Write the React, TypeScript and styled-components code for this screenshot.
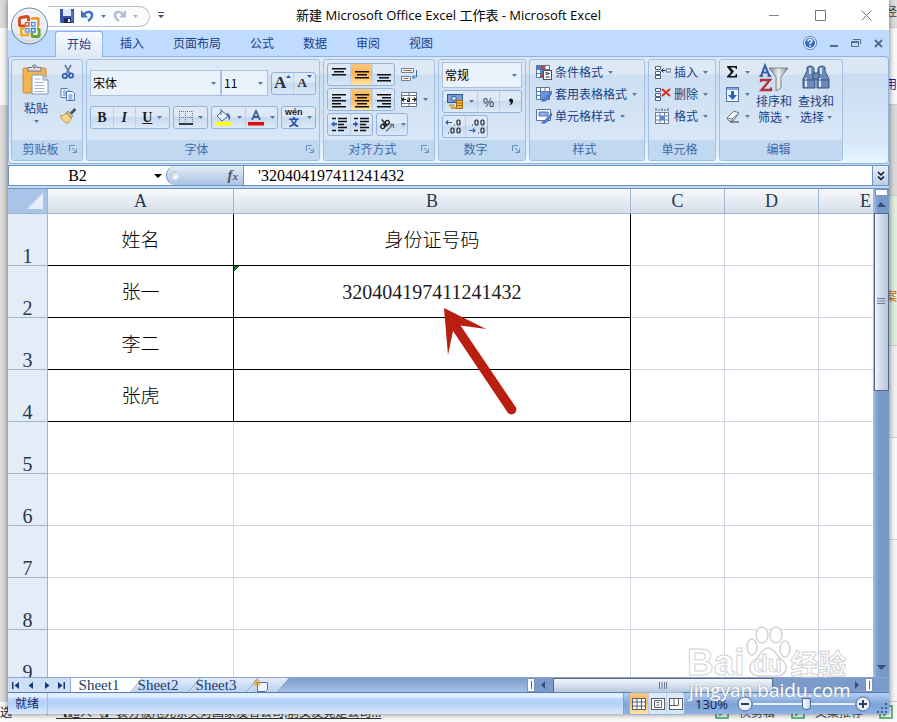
import React from "react";
import styled, { createGlobalStyle, css } from "styled-components";

const ui = `"Noto Sans CJK SC", "Open Sans", sans-serif`;
const serif = `"Liberation Serif", "Noto Sans CJK SC", serif`;

const Global = createGlobalStyle`
  * { box-sizing: border-box; }
  body { margin: 0; font-family: ${ui}; font-size: 12px; line-height: 16px; overflow: hidden; }
  button, input, select { font: inherit; color: inherit; margin: 0; padding: 0; border: 0; background: none; border-radius: 0; outline: none; }
  svg { display: block; flex: none; }
`;

/* ---------- page behind the window ---------- */

const Desktop = styled.div`
  position: relative;
  height: 100vh;
  padding: 0 8px 8px;
  overflow: hidden;
  background: #fafafa;
`;

const Backdrop = styled.div`
  position: absolute;
  inset: 0;
  display: grid;
  grid-template: 1fr 20px / 8px 1fr 12px;
`;

const LeftEdge = styled.div`
  background: linear-gradient(#dcdcdc 0 28px, #fafafa 28px 105px, #dddbd9 105px);
`;

const RightEdge = styled.div`
  grid-column: 3;
  display: flex;
  flex-direction: column;
  overflow: hidden;
`;

const EdgeBlock = styled.div<{ $h?: number; $bg: string; $ink?: string; $top?: number }>`
  flex: ${(p) => (p.$h ? `none` : `1`)};
  height: ${(p) => (p.$h ? `${p.$h}px` : "auto")};
  padding-top: ${(p) => p.$top || 0}px;
  background: ${(p) => p.$bg};
  color: ${(p) => p.$ink || "#444"};
  border-bottom: 1px solid #cfcfcf;
  white-space: nowrap;
  overflow: hidden;
`;

const PageFoot = styled.div`
  grid-column: 1 / -1;
  display: flex;
  align-items: center;
  padding-right: 4px;
  background: #fafafa;
  color: #555;
  font-size: 12px;
  line-height: 20px;
  white-space: nowrap;
`;

const FootWord = styled.span`
  width: 42px;
  color: #222;
`;

const FootLink = styled.a`
  color: #333;
  margin-left: 4px;
  margin-right: auto;
`;

const FootItem = styled.span`
  display: flex;
  gap: 10px;
  align-items: center;
  margin-left: 16px;
`;

/* ---------- window ---------- */

const Window = styled.div`
  position: relative;
  display: flex;
  flex-direction: column;
  height: 100%;
  background: #bfdbff;
  box-shadow: 0 0 6px rgba(0, 0, 0, 0.55);
`;

const TitleBar = styled.header`
  display: grid;
  grid-template-columns: 1fr auto 1fr;
  align-items: center;
  height: 30px;
  background: #fff;
`;

const Quick = styled.div`
  display: flex;
  align-items: center;
  padding-left: 40px;
  gap: 8px;
`;

const QuickPill = styled.div`
  display: flex;
  align-items: center;
  gap: 7px;
  width: 102px;
  height: 21px;
  padding-left: 12px;
  margin-top: 2px;
  border: 1px solid #b9c0ca;
  border-left: 0;
  border-radius: 0 11px 11px 0;
  background: #fbfcfe;
`;

const Title = styled.h1`
  margin: 0;
  font: 13px/16px "Open Sans", "Noto Sans CJK SC", sans-serif;
  color: #000;
  white-space: nowrap;
`;

const Caption = styled.div`
  display: flex;
  justify-content: flex-end;
`;

const CaptionButton = styled.button`
  display: grid;
  place-items: center;
  width: 46px;
  height: 30px;
`;

const Orb = styled.button`
  position: absolute;
  left: 2px;
  top: 7px;
  width: 40px;
  height: 40px;
  z-index: 2;
`;

const TabBar = styled.nav`
  display: flex;
  height: 26px;
  padding-left: 47px;
  align-items: stretch;
  color: #15428b;
`;

const Tab = styled.button<{ $on?: boolean }>`
  padding: 0 14px 0 15px;
  line-height: 24px;
  ${(p) =>
    p.$on &&
    css`
      width: 48px;
      margin: 1px 2px -1px 0;
      padding: 0 0 3px;
      border: 1px solid #8db2e3;
      border-bottom: 0;
      border-radius: 3px 3px 0 0;
      background: linear-gradient(#f6faff, #dfeaf6);
      z-index: 1;
    `}
`;

const TabTools = styled.div`
  display: flex;
  align-items: center;
  gap: 13px;
  margin-left: auto;
  padding-right: 5px;
`;

const PlainButton = styled.button`
  display: inline-flex;
  align-items: center;
  justify-content: center;
`;

const Ribbon = styled.section`
  display: flex;
  gap: 3px;
  padding: 2px;
  border: 1px solid #8db2e3;
  border-radius: 4px;
  height: 108px;
  background: linear-gradient(#dbe7f5 0 16px, #c9dcf1 17px, #d8e8f8 80%, #e6f7ff);
`;

const Group = styled.section<{ $w: number }>`
  display: flex;
  flex-direction: column;
  width: ${(p) => p.$w}px;
  height: 102px;
  border: 1px solid #a3c0e2;
  border-radius: 3px;
  overflow: hidden;
  background: linear-gradient(#dfe9f6 0 14px, #cddff2 15px, #dbe9f8);
`;

const GroupBody = styled.div<{ $top?: number; $gap?: number }>`
  flex: 1;
  display: flex;
  flex-direction: column;
  gap: ${(p) => p.$gap || 0}px;
  padding: ${(p) => p.$top || 0}px 3px 0;
`;

const GroupLabel = styled.footer`
  display: flex;
  align-items: center;
  height: 20px;
  padding: 0 5px 2px 0;
  background: #c1d8f1;
  color: #3e6aaa;

  span {
    flex: 1;
    text-align: center;
  }
`;

const Row = styled.div<{ $gap?: number }>`
  display: flex;
  align-items: center;
  gap: ${(p) => p.$gap || 0}px;
`;

const Segment = styled.div`
  display: flex;
  height: 23px;
  border: 1px solid #95b3da;
  border-radius: 3px;
  overflow: hidden;
  background: linear-gradient(#dde9f7 0 45%, #c6d9ef 46%, #dbe9f8);
`;

const SegButton = styled.button<{ $w?: number; $on?: boolean }>`
  display: flex;
  align-items: center;
  justify-content: center;
  gap: 5px;
  width: ${(p) => p.$w || 22}px;
  color: #1d1d1d;
  background: ${(p) => (p.$on ? "linear-gradient(#fcc77c, #fdb45b 45%, #ffe6a4)" : "none")};

  & + & {
    border-left: 1px solid #bccfe8;
  }
`;

const Glyph = styled.span<{ $italic?: boolean; $line?: boolean; $size?: number }>`
  font: ${(p) => (p.$italic ? "italic " : "")}bold ${(p) => p.$size || 14}px/16px "Liberation Serif", serif;
  text-decoration: ${(p) => (p.$line ? "underline" : "none")};
`;

const SizeGlyph = styled(Glyph)`
  display: flex;
  align-items: center;
  color: #2b2f38;

  svg {
    align-self: flex-start;
  }
`;

const Combo = styled.label<{ $w: number }>`
  position: relative;
  display: flex;
  width: ${(p) => p.$w}px;
  height: 26px;
  border: 1px solid #abc1de;
  background: #eaf2fb;
  color: #000;

  select {
    appearance: none;
    width: 100%;
    padding-left: 2px;
  }

  svg {
    position: absolute;
    right: 4px;
    top: 11px;
    pointer-events: none;
  }
`;

const ClipRow = styled.div`
  display: flex;
  gap: 10px;
  padding: 4px 3px 0 7px;
`;

const BigButton = styled.button<{ $w: number; $gap?: number }>`
  display: flex;
  flex-direction: column;
  align-items: center;
  width: ${(p) => p.$w}px;
  gap: ${(p) => p.$gap || 0}px;
  color: #15428b;
  white-space: nowrap;
`;

const IconColumn = styled.div`
  display: flex;
  flex-direction: column;
  gap: 6px;
`;

const ListButton = styled.button`
  display: flex;
  align-items: center;
  gap: 3px;
  height: 22px;
  padding-left: 3px;
  color: #15428b;
  white-space: nowrap;

  svg:last-child {
    margin-left: 2px;
  }
`;

const EditRow = styled.div`
  display: flex;
  gap: 6px;
  padding-top: 1px;
`;

/* ---------- formula bar ---------- */

const FormulaBar = styled.div`
  display: flex;
  height: 21px;
  margin: 1px 0 0;
  border: 1px solid #6f93b8;
  background: #fff;
  color: #000;
  font: 16px/19px ${serif};
`;

const NameBox = styled.label`
  display: flex;
  align-items: center;
  width: 157px;
  padding-right: 4px;

  input {
    width: 100%;
    padding-right: 8px;
    text-align: center;
  }
`;

const FxButton = styled.button`
  display: flex;
  align-items: center;
  justify-content: space-between;
  width: 78px;
  padding: 0 5px 0 3px;
  border: 1px solid #7795bf;
  border-width: 0 1px;
  border-radius: 9px 0 0 9px;
  background: linear-gradient(#e4edf9, #a9c2e4);
  font: italic bold 15px/18px "Liberation Serif", serif;
  color: #4a5568;

  i {
    width: 9px;
    height: 9px;
    border-radius: 50%;
    background: radial-gradient(circle at 65% 65%, #fff, #a9b5c8);
  }
  small {
    font-size: 11px;
  }
`;

const FormulaInput = styled.input`
  flex: 1;
  min-width: 0;
  padding-left: 14px;
`;

const Expand = styled.button`
  display: grid;
  place-items: center;
  width: 16px;
  border-left: 1px solid #6f93b8;
  background: linear-gradient(#e8effa, #b9cdea);
`;

/* ---------- sheet ---------- */

const Workspace = styled.main`
  position: relative;
  flex: 1;
  min-height: 0;
  display: flex;
  margin-top: 2px;
  border-top: 1px solid #6f93b8;
  background: #fff;
`;

const SheetView = styled.div`
  flex: 1;
  min-width: 0;
  overflow: hidden;
`;

const Sheet = styled.table`
  table-layout: fixed;
  width: 905px;
  border-collapse: separate;
  border-spacing: 0;
  font: 20px/22px ${serif};
  color: #1c1c1c;
`;

const ColHead = styled.th`
  height: 25px;
  padding: 0;
  font-size: 18px;
  font-weight: 400;
  color: #26384e;
  border-right: 1px solid #9eb6ce;
  border-bottom: 1px solid #9eb6ce;
  background: linear-gradient(#f8fafc, #d5deea);
`;

const Corner = styled.td`
  padding: 0;
  border-right: 1px solid #9eb6ce;
  border-bottom: 1px solid #9eb6ce;
  background: #a9c4e9;

  svg {
    margin-left: auto;
    margin-right: 4px;
  }
`;

const RowHead = styled.th`
  height: 52px;
  padding: 0;
  font-weight: 400;
  vertical-align: bottom;
  line-height: 18px;
  color: #26384e;
  border-right: 1px solid #9eb6ce;
  border-bottom: 1px solid #9eb6ce;
  background: #e4ecf7;
`;

const Cell = styled.td<{ $boxed?: boolean; $flag?: boolean }>`
  padding: 0;
  text-align: center;
  border-right: 1px solid ${(p) => (p.$boxed ? "#000" : "#d0d7e5")};
  border-bottom: 1px solid ${(p) => (p.$boxed ? "#000" : "#d0d7e5")};
  background: ${(p) => (p.$flag ? "linear-gradient(135deg, #127622 0 4px, transparent 4px)" : "none")};
`;

const Cjk = styled.span`
  font: 300 19px/22px "Noto Sans CJK SC", sans-serif;
  color: #000;
`;

const VScroll = styled.div`
  display: flex;
  flex-direction: column;
  align-items: center;
  width: 16px;
  background: linear-gradient(90deg, #a6bfe2, #7b9bcb 30%, #7797c6);
`;

const VSplit = styled.div`
  width: 13px;
  height: 7px;
  border: 1px solid #7795bf;
  background: #fff;
`;

const ScrollButton = styled.button<{ $h?: number; $w?: number }>`
  display: grid;
  place-items: center;
  width: ${(p) => p.$w || 16}px;
  height: ${(p) => p.$h || 17}px;
`;

const VThumb = styled.div`
  display: grid;
  place-items: center;
  width: 15px;
  height: 178px;
  border: 1px solid #56688a;
  background: linear-gradient(90deg, #f4f7fc, #d4deec 40%, #b4c4da);
`;

const VTrack = styled.div`
  flex: 1;
`;

const Arrow = styled.svg`
  position: absolute;
  left: 434px;
  top: 119px;
  pointer-events: none;
`;

/* ---------- bottom bars ---------- */

const SheetBar = styled.div`
  display: flex;
  height: 15px;
  background: linear-gradient(#7e9fd0, #a5c0e6);
  border-top: 1px solid #8aa6cf;
`;

const NavButtons = styled.div`
  display: flex;
  width: 63px;
  justify-content: space-around;
  background: #cfe0f6;
  border-right: 1px solid #8aa6cf;
`;

const SheetTab = styled.button<{ $on?: boolean; $w?: number }>`
  position: relative;
  width: ${(p) => p.$w || 58}px;
  display: flex;
  align-items: center;
  justify-content: center;
  padding-right: 4px;
  font: 15px/14px ${serif};
  color: #1c3c6e;
  background: ${(p) => (p.$on ? "#fff" : "none")};
  z-index: 0;

  &::before {
    content: "";
    position: absolute;
    inset: 0 -6px 0 6px;
    z-index: -1;
    transform: skewX(-40deg);
    background: ${(p) => (p.$on ? "#fff" : "linear-gradient(#e2edfa, #b9d0ef)")};
    border-right: 1px solid #7f9cc6;
    border-left: ${(p) => (p.$on ? "0" : "1px solid #f4f8ff")};
  }
`;

const HScroll = styled.div`
  display: flex;
  width: 362px;
  margin-left: auto;
  background: #7b9bcb;
`;

const HSplit = styled.div`
  display: grid;
  place-items: center;
  width: 8px;
  background: #fff;
  border: 1px solid #7795bf;

  &::after {
    content: "";
    width: 1px;
    height: 8px;
    background: #56688a;
  }
`;

const HThumb = styled.div`
  display: grid;
  place-items: center;
  flex: 1;
  margin-right: 76px;
  border: 1px solid #56688a;
  border-bottom: 0;
  background: linear-gradient(#f4f7fc, #b9c8de);
`;

const StatusBar = styled.footer`
  display: flex;
  height: 22px;
  border-top: 1px solid #567db1;
  background: linear-gradient(#e1eefe 0 4px, #c3dafa 5px, #b3d0f8 10px, #d9e9fd);
  color: #0c2a66;
`;

const Ready = styled.span`
  width: 40px;
  padding-left: 7px;
  line-height: 20px;
  border-right: 1px solid #a0bde8;
`;

const StatusTools = styled.div`
  display: flex;
  align-items: center;
  width: 266px;
  margin-left: auto;
  padding-left: 5px;
  border-left: 1px solid #7fa0d0;
  background: linear-gradient(#b4cff5, #86aadd 45%, #7ea3d9 55%, #8fb3e5);
  color: #0c2050;

  output {
    width: 42px;
    margin-left: 10px;
    font: 13px/18px "Open Sans", sans-serif;
  }
`;

const Slider = styled.input`
  appearance: none;
  width: 102px;
  height: 16px;
  background: linear-gradient(transparent 7px, #e8f1ff 7px 9px, transparent 9px);

  &::-webkit-slider-thumb {
    appearance: none;
    width: 9px;
    height: 12px;
    border: 1px solid #4d6a98;
    border-radius: 1px 1px 5px 5px;
    background: linear-gradient(90deg, #fff, #c5d3e6);
  }
`;

const Grip = styled.svg`
  margin-left: auto;
  align-self: flex-end;
`;

const Watermark = styled.div`
  position: absolute;
  right: 32px;
  bottom: 13px;
  width: 170px;
  pointer-events: none;
`;

const MarkLine = styled.div`
  display: flex;
  align-items: flex-end;
  color: rgba(255, 255, 255, 0.9);
  font: bold 37px/34px "Liberation Sans", sans-serif;
  -webkit-text-stroke: 1px #d3d3d6;
`;

const MarkPaw = styled.div`
  position: relative;
  width: 46px;
  height: 52px;
  margin-bottom: 2px;

  span {
    position: absolute;
    left: 9px;
    top: 26px;
    font-size: 23px;
    line-height: 24px;
  }
`;

const MarkCjk = styled.span`
  font: bold 28px/34px "Noto Sans CJK SC", sans-serif;
`;

const MarkSite = styled.div`
  padding-left: 2px;
  font: 19px/21px "Open Sans", sans-serif;
  color: #fff;
  text-shadow: 0 0 2px #8c93a0;
`;

/* ---------- icons ---------- */

const Drop = ({ color = "#5b7aa5", w = 5 }: { color?: string; w?: number }) => (
  <svg width={w} height={w > 5 ? 4 : 3} viewBox="0 0 5 3" preserveAspectRatio="none">
    <path d="M0 0h5L2.500 3z" fill={color} />
  </svg>
);

const OrbIcon = () => (
  <svg width="40" height="40" viewBox="0 0 40 40">
    <defs>
      <radialGradient id="orb" cx=".5" cy=".4" r=".65">
        <stop offset="0" stopColor="#fff" />
        <stop offset=".7" stopColor="#e6eaf2" />
        <stop offset="1" stopColor="#9dabc4" />
      </radialGradient>
    </defs>
    <circle cx="19.500" cy="19" r="18" fill="url(#orb)" stroke="#73839d" />
    <circle cx="19.500" cy="19" r="16.500" fill="none" stroke="#fff" opacity=".8" />
    <g fill="none" strokeWidth="2.800">
      <path d="M15 19h-4q-1.500 0-1.500-1.500V12q0-1.300 1.400-1.500l6-1Q18.500 9.300 18.500 11v3" stroke="#d5481c" />
      <path d="M22 13v-.5q0-1.200 1.200-1.200h4q1.200 0 1.200 1.200v5q0 1.200-1.200 1.200H27" stroke="#ef9a28" />
      <path d="M14.500 21.500h-2q-1.200 0-1.200 1.200V27q0 1.200 1.200 1.200H17q1.200 0 1.200-1.200v-1" stroke="#f0ae2c" />
      <path d="M22 26v2.300q0 1.200 1.200 1.200H28q1.200 0 1.200-1.200V23q0-1.200-1.200-1.200h-1" stroke="#6aa63a" />
    </g>
    <g fill="#fff" strokeWidth="1.500">
      <rect x="15.500" y="15.500" width="3.500" height="3.500" stroke="#de5a2a" />
      <rect x="21.500" y="15.500" width="3.500" height="3.500" stroke="#5b96d6" />
      <rect x="15.500" y="21.500" width="3.500" height="3.500" stroke="#5b96d6" />
      <rect x="21.500" y="21.500" width="3.500" height="3.500" stroke="#3f7cc4" />
    </g>
  </svg>
);

const SaveIcon = () => (
  <svg width="14" height="14" viewBox="0 0 14 14">
    <path d="M0 0h14v14H1l-1-1z" fill="#3b4fa8" />
    <path d="M3 0h8v7H3z" fill="#dfe8fb" />
    <path d="M4 9h7v5H4z" fill="#20265e" />
    <path d="M8 10h2v3H8z" fill="#fff" />
    <path d="M12 2v10" stroke="#7f92dd" />
  </svg>
);

const UndoIcon = ({ flip, color }: { flip?: boolean; color: string }) => (
  <svg width="13" height="14" viewBox="0 0 13 14">
    <g transform={flip ? "translate(13 0) scale(-1 1)" : undefined}>
      <path d="M3 5.500C6 1.500 11 2.500 11 6c0 2.800-1.600 4.500-4 6" fill="none" stroke={color} strokeWidth="2.400" />
      <path d="M0 1v7.500h7z" fill={color} />
    </g>
  </svg>
);

const PasteIcon = () => (
  <svg width="28" height="32" viewBox="0 0 28 32">
    <rect x="1" y="4" width="23" height="25" rx="1.500" fill="#f0b552" stroke="#c98c35" />
    <path d="M6 7V3.500h4Q10 1 12.500 1T15 3.500h4V7z" fill="#dfe2e8" stroke="#6e7482" />
    <circle cx="12.500" cy="3.500" r="1" fill="#555" />
    <path d="M10 11h11l5 5v14H10z" fill="#fff" stroke="#7d93b8" />
    <path d="M21 11v5h5" fill="#d6e2f2" stroke="#7d93b8" />
    <path d="M12.500 15h6M12.500 18.500h10M12.500 21.500h10M12.500 24.500h10M12.500 27.500h10" stroke="#a4b6d3" />
  </svg>
);

const CutIcon = () => (
  <svg width="16" height="16" viewBox="0 0 16 16" fill="none">
    <path d="M5 1l5 9M11 1L6 10" stroke="#5d7fae" strokeWidth="1.600" />
    <circle cx="4.800" cy="12" r="2.200" stroke="#2d5cb8" strokeWidth="1.700" />
    <circle cx="11" cy="11.500" r="2.200" stroke="#2d5cb8" strokeWidth="1.700" />
  </svg>
);

const CopyIcon = () => (
  <svg width="16" height="16" viewBox="0 0 16 16" fill="#f4f8ff" stroke="#4d78b8">
    <path d="M1 2.500h6l2 2v7H1z" />
    <path d="M6.500 5.500h6l2 2v7h-8z" />
    <path d="M3 5h3M3 7h3M3 9h3M8.500 9h4M8.500 11h4M8.500 13h4" />
  </svg>
);

const BrushIcon = () => (
  <svg width="16" height="16" viewBox="0 0 16 16">
    <path d="M15.500 1L11 5.500" stroke="#4a506e" strokeWidth="3" />
    <path d="M8 3l5 5-2 2-5-5z" fill="#c9b98c" stroke="#6d6a70" strokeWidth=".6" />
    <path d="M6 5l5.500 5.500Q10 14 7 15.500 2.500 13 0 8q4 0 6-3z" fill="#f4d782" stroke="#ad8430" strokeWidth=".8" />
  </svg>
);

const Launcher = () => (
  <svg width="8" height="8" viewBox="0 0 8 8" fill="none" stroke="#6d8fbf">
    <path d="M.5 6V.5H6M3 3l4 4M7.500 3.500v4h-4" />
  </svg>
);

const BorderIcon = () => (
  <svg width="14" height="14" viewBox="0 0 14 14" fill="none" stroke="#6a7688">
    <path d="M.5 13V.5M13.500 13V.5M0 .5h14M6.500 0v12M0 6.500h14" strokeDasharray="1 1" />
    <path d="M0 13h14" stroke="#000" strokeWidth="1.500" />
  </svg>
);

const FillIcon = () => (
  <svg width="17" height="17" viewBox="0 0 17 17">
    <path d="M7 2l6 5-6 5-5-5z" fill="#e9eff8" stroke="#53647f" />
    <path d="M6 0v6" stroke="#53647f" />
    <path d="M11 4q5 0 4 7-2-1-2-4z" fill="#3568b8" />
    <path d="M0 13h16v3.500H0z" fill="#ffff00" />
  </svg>
);

const FontColorIcon = () => (
  <svg width="17" height="17" viewBox="0 0 17 17">
    <path d="M4 11L8 2l4 9M5.500 8h5" fill="none" stroke="#3b5b94" strokeWidth="1.800" />
    <path d="M0 13h16v3.500H0z" fill="#e00b0b" />
  </svg>
);

const PinyinLabel = styled.span`
  display: flex;
  flex-direction: column;
  align-items: center;
  font: bold 9px/9px "Liberation Sans", "Noto Sans CJK SC", sans-serif;
  color: #222;

  b {
    font-size: 10px;
    line-height: 11px;
    color: #2c4fae;
  }
`;

const lineSets: Record<string, [number, number, number][]> = {
  top: [[1, 1, 14], [3, 4, 10], [1, 7, 14]],
  middle: [[1, 4, 14], [3, 7, 10], [1, 10, 14]],
  bottom: [[1, 7, 14], [3, 10, 10], [1, 13, 14]],
  left: [[1, 2, 14], [1, 5, 9], [1, 8, 14], [1, 11, 9], [1, 14, 14]],
  center: [[1, 2, 14], [3, 5, 10], [1, 8, 14], [3, 11, 10], [1, 14, 14]],
  right: [[1, 2, 14], [6, 5, 9], [1, 8, 14], [6, 11, 9], [1, 14, 14]],
};

const Lines = ({ kind }: { kind: string }) => (
  <svg width="16" height="16" viewBox="0 0 16 16" fill="#111">
    {lineSets[kind].map(([x, y, w]) => (
      <rect key={y} x={x} y={y} width={w} height="1.500" />
    ))}
  </svg>
);

const IndentIcon = ({ right }: { right?: boolean }) => (
  <svg width="17" height="15" viewBox="0 0 17 15">
    <path d="M1 1.500h4M7 1.500h9M7 4.500h9M7 7.500h6M7 10.500h9M1 13.500h4M7 13.500h6" stroke="#111" strokeWidth="1.600" />
    <path d={right ? "M5.500 7L2 4v2H0v2h2v2z" : "M0 7l3.500-3v2H6v2H3.500v2z"} fill="#2f62b5" />
  </svg>
);

const WrapIcon = () => (
  <svg width="17" height="16" viewBox="0 0 17 16" fill="#f3f6fb" stroke="#737f92">
    <path d="M.5 1.500h12v4H.5zM.5 9.500h9v4h-9z" />
    <path d="M2.500 3.500h8M2.500 11.500h5" stroke="#a8632b" />
    <path d="M15.500 3v7h-4m2-2l-2 2 2 2" fill="none" stroke="#3c6eb5" />
  </svg>
);

const MergeIcon = () => (
  <svg width="16" height="15" viewBox="0 0 16 15">
    <path d="M.5.500h15v14H.5zM8 .5v3M8 11.500v3M.5 3.500h15M.5 11.500h15" fill="#fff" stroke="#66748c" />
    <path d="M1 7.500h4M3 5.500l-2 2 2 2M15 7.500h-4M13 5.500l2 2-2 2M6.500 6h2v3.500h-2V8h2" fill="none" stroke="#222" strokeWidth="1.100" />
  </svg>
);

const AngleIcon = () => (
  <svg width="17" height="16" viewBox="0 0 17 16" fill="none" stroke="#222" strokeWidth="1.300">
    <g transform="rotate(-42 7 8)">
      <circle cx="3.500" cy="7" r="2" />
      <path d="M6 4.500V9.500M7.500 1v8.500" />
      <circle cx="9.700" cy="7" r="2" />
    </g>
    <path d="M7 14.500l7-7M11 7.500h3.500V11" stroke="#68758a" />
  </svg>
);

const MoneyIcon = () => (
  <svg width="17" height="17" viewBox="0 0 17 17">
    <rect x=".5" y="1.500" width="15" height="8" fill="#7b9fd3" stroke="#31558f" />
    <circle cx="7" cy="5.500" r="2.300" fill="#cfe0f6" stroke="#31558f" />
    <path d="M9.500 7.500h6v8h-6z" fill="#f2b632" stroke="#a36b12" />
    <path d="M9.500 10h6M9.500 12.500h6" stroke="#a36b12" />
    <path d="M2 12.500h5M4 15h5" stroke="#d99a26" strokeWidth="1.800" />
  </svg>
);

const DecimalIcon = ({ fewer }: { fewer?: boolean }) => (
  <svg width="18" height="16" viewBox="0 0 18 16" fill="none" stroke="#222" strokeWidth="1.200">
    {fewer ? (
      <>
        <path d="M4 6h1" />
        <rect x="7" y="1" width="3" height="5" rx="1.200" />
        <rect x="13" y="1" width="3" height="5" rx="1.200" />
        <path d="M10 14h1" />
        <rect x="13" y="9" width="3" height="5" rx="1.200" />
        <path d="M1 11.500h6m-2-2l2 2-2 2" stroke="#2d62bd" />
      </>
    ) : (
      <>
        <path d="M9 6h1M3 14h1" />
        <rect x="12" y="1" width="3" height="5" rx="1.200" />
        <rect x="6" y="9" width="3" height="5" rx="1.200" />
        <rect x="12" y="9" width="3" height="5" rx="1.200" />
        <path d="M7 3.500H1m2-2l-2 2 2 2" stroke="#2d62bd" />
      </>
    )}
  </svg>
);

const StyleIcon = ({ kind }: { kind: "cond" | "table" | "cell" }) => (
  <svg width="16" height="16" viewBox="0 0 16 16">
    {kind !== "cell" && <path d="M.5 1.500h13v12H.5zM.5 5.500h13M.5 9.500h13M4.500 1.500v12M9 1.500v12" fill="#fff" stroke="#5476a8" />}
    {kind === "cond" && (
      <>
        <path d="M5 2h4v3H5zM5 10h4v3H5z" fill="#d33b33" />
        <path d="M1 2h3v3H1zM5 6h4v3H5z" fill="#577fc9" />
        <rect x="7.500" y="6.500" width="8" height="9" fill="#fff" stroke="#454f63" />
        <path d="M9.500 8.500l4 1-4 1M9.500 13h4" fill="none" stroke="#222" />
      </>
    )}
    {kind === "table" && <path d="M5 6h8v7H5z" fill="#6a97dc" />}
    {kind === "cell" && (
      <>
        <path d="M.5 1.500h14v11H.5z" fill="#fff" stroke="#4f73a8" />
        <path d="M3 4h9v4H3z" fill="#8cb1e8" stroke="#4f73a8" />
      </>
    )}
    {kind !== "cond" && <path d="M15.500 5l-6 6.500-4 3.500q4 1 6-1.500L16 7z" fill="#5585d3" stroke="#2b529a" strokeWidth=".6" />}
  </svg>
);

const CellsIcon = ({ kind }: { kind: "insert" | "delete" | "format" }) => (
  <svg width="16" height="16" viewBox="0 0 16 16">
    {kind === "format" ? (
      <>
        <path d="M.5 4.500h13v11H.5zM.5 8h13M.5 12h13M5 4.500v11M9.500 4.500v11" fill="#fff" stroke="#667da0" />
        <path d="M5 8h4.500v4H5z" fill="#5585d3" />
        <path d="M1 0v3M4 1v2M7 0v3M10 1v2M13 0v3" stroke="#445a7c" />
      </>
    ) : (
      <>
        <path d="M.5 2.500h5v3h-5zM.5 7.500h5v3h-5zM.5 11.500h5v3h-5z" fill="#fff" stroke="#445f8c" />
        {kind === "insert" ? (
          <>
            <path d="M11 5h5v3h-5z" fill="#fff" stroke="#445f8c" />
            <path d="M10 6.500H6.500m2-2l-2 2 2 2" fill="none" stroke="#222" />
          </>
        ) : (
          <path d="M7 3l8 7M15 3L7 10" stroke="#d9301f" strokeWidth="2" />
        )}
      </>
    )}
  </svg>
);

const FillDownIcon = () => (
  <svg width="14" height="15" viewBox="0 0 14 15">
    <rect x=".5" y=".5" width="12" height="14" fill="#f2f7ff" stroke="#4f73a8" />
    <path d="M1 1h11v2H1z" fill="#7fa7e2" />
    <path d="M5 4h3v4h3l-4.500 5L2 8h3z" fill="#2c62c4" />
  </svg>
);

const EraserIcon = () => (
  <svg width="14" height="13" viewBox="0 0 14 13">
    <path d="M1 8l7-7 5 2-6 8H3z" fill="#fff" stroke="#66728a" />
    <path d="M1 8l5 1 1 2M6 9l7-6" fill="none" stroke="#66728a" />
    <path d="M4 12h9" stroke="#333" />
  </svg>
);

const SortIcon = () => (
  <svg width="30" height="32" viewBox="0 -2 30 32">
    <defs>
      <linearGradient id="funnel">
        <stop offset="0" stopColor="#7c7f86" />
        <stop offset=".5" stopColor="#eceef0" />
        <stop offset="1" stopColor="#85888f" />
      </linearGradient>
    </defs>
    <path d="M10 5h19l-7 9v11l-5 3V14z" fill="url(#funnel)" stroke="#6f7278" strokeWidth=".8" />
    <path d="M2 13L6 2.500 10.500 13M3.500 9.500h6M.5 13h3.500M8.500 13h3.500" fill="none" stroke="#3760aa" strokeWidth="2" />
    <path d="M2 19v-2h9L2.500 27H12v-2.500" fill="none" stroke="#b3323a" strokeWidth="2.300" />
  </svg>
);

const FindIcon = () => (
  <svg width="28" height="32" viewBox="0 -2 28 32">
    <g fill="#6d8bb9" stroke="#395581">
      <path d="M5 8V5q0-2 3-2t4 2v3l1 5v12H1V16z" />
      <path d="M23 8V5q0-2-3-2t-4 2v3l-1 5v12h12v-9z" />
      <path d="M11 10h6v6h-6z" />
    </g>
    <path d="M4 15v9M18 15v9M8 5v6M19 5v6" stroke="#d7e4f6" strokeWidth="2" />
    <path d="M1 17h12M15 17h12" stroke="#395581" />
  </svg>
);

const HelpIcon = () => (
  <svg width="14" height="14" viewBox="0 0 14 14">
    <circle cx="7" cy="7" r="6.500" fill="#fff" stroke="#4f79b8" />
    <circle cx="7" cy="7" r="5" fill="#2f6cc9" />
    <path d="M5 5.500q0-2 2-2t2 1.700Q9 6.300 7 7v1.300M7 9.300V11" fill="none" stroke="#fff" strokeWidth="1.300" />
  </svg>
);

const Tri = ({ d, w = 8, h = 9, fill = "#173a7c" }: { d: string; w?: number; h?: number; fill?: string }) => (
  <svg width={w} height={h} viewBox={`0 0 ${w} ${h}`}>
    <path d={d} fill={fill} />
  </svg>
);

const NewSheetIcon = () => (
  <svg width="15" height="13" viewBox="0 0 15 13">
    <path d="M4.500 3.500h10v7l-2 2h-8z" fill="#eef4ff" stroke="#5571a5" />
    <path d="M4 0v8M0 4h8M1 1l6 6M7 1L1 7" stroke="#dd9422" />
  </svg>
);

const ViewIcon = ({ kind }: { kind: number }) => (
  <svg width="14" height="12" viewBox="0 0 14 12" fill="#fff" stroke="#59616f">
    <rect x=".5" y=".5" width="13" height="11" />
    {kind === 0 && <path d="M.5 4h13M.5 8h13M5 .5v11M9.500 .5v11" />}
    {kind === 1 && <path d="M3.500 2.500h7v7h-7zM5.500 4.500h3M5.500 7h3" />}
    {kind === 2 && <path d="M5 .5V7M9.500 .5V7M.5 7.500h9" />}
  </svg>
);

const ZoomIcon = ({ plus }: { plus?: boolean }) => (
  <svg width="16" height="16" viewBox="0 0 16 16">
    <circle cx="8" cy="8" r="7" fill="#e9f0fa" stroke="#4d6a98" />
    <path d={plus ? "M4 8h8M8 4v8" : "M4 8h8"} stroke="#273d66" strokeWidth="2" />
  </svg>
);

const FootIcon = () => (
  <svg width="14" height="14" viewBox="0 0 14 14" fill="none" stroke="#3aa564" strokeWidth="1.500">
    <rect x="1" y="1" width="12" height="12" />
    <path d="M5 4l4 3-4 3z" fill="#3aa564" />
  </svg>
);

/* ---------- data ---------- */

const columns = ["A", "B", "C", "D", "E"];
const rows: string[][] = [
  ["姓名", "身份证号码"],
  ["张一", "320404197411241432"],
  ["李二", ""],
  ["张虎", ""],
  [], [], [], [], [],
];

const Label = ({ text, launcher }: { text: string; launcher?: boolean }) => (
  <GroupLabel>
    <span>{text}</span>
    {launcher && (
      <PlainButton aria-label={`${text}设置`}>
        <Launcher />
      </PlainButton>
    )}
  </GroupLabel>
);

export default function App() {
  return (
    <Desktop>
      <Global />
      <Backdrop>
        <LeftEdge />
        <RightEdge>
          <EdgeBlock $h={28} $bg="#e2e0df" $top={3}>经验</EdgeBlock>
          <EdgeBlock $h={77} $bg="#fafafa" $ink="#1a1a9c" $top={48}>用:</EdgeBlock>
          <EdgeBlock $h={91} $bg="#dedcda" />
          <EdgeBlock $h={150} $bg="#e1eee0" $ink="#c46a1c" $top={92}>案</EdgeBlock>
          <EdgeBlock $h={92} $bg="#f1f1f1" />
          <EdgeBlock $h={102} $bg="#fafafa" />
          <EdgeBlock $bg="#f6f6f6" />
        </RightEdge>
        <PageFoot>
          <FootWord>选</FootWord>
          <Tri d="M0 0l5 5 5-5v2L5 7 0 2z" w={10} h={8} fill="#999" />
          <FootLink href="#">【超人气】装穷被甩兄亲哭对国家没名公司,前女友竟是公司...</FootLink>
          <FootItem><FootIcon />快剪辑</FootItem>
          <FootItem><FootIcon />文案推荐</FootItem>
          <FootItem><FootIcon /></FootItem>
        </PageFoot>
      </Backdrop>

      <Window>
        <TitleBar>
          <Quick>
            <QuickPill>
              <PlainButton aria-label="保存"><SaveIcon /></PlainButton>
              <PlainButton aria-label="撤消"><UndoIcon color="#3f6fc2" /></PlainButton>
              <Drop />
              <PlainButton aria-label="恢复"><UndoIcon flip color="#b3bfd0" /></PlainButton>
              <Drop color="#a9b4c4" />
            </QuickPill>
            <PlainButton aria-label="自定义快速访问工具栏">
              <Tri d="M0 0h6v1H0zM0 3h6L3 6z" w={6} h={7} fill="#3b4f70" />
            </PlainButton>
          </Quick>
          <Title>新建 Microsoft Office Excel 工作表 - Microsoft Excel</Title>
          <Caption>
            <CaptionButton aria-label="最小化">
              <svg width="10" height="10"><path d="M0 5.500h10" stroke="#888" /></svg>
            </CaptionButton>
            <CaptionButton aria-label="最大化">
              <svg width="11" height="11"><path d="M.5.500h10v10h-10z" fill="none" stroke="#777" /></svg>
            </CaptionButton>
            <CaptionButton aria-label="关闭">
              <svg width="11" height="11"><path d="M.5.500l10 10M10.500.500l-10 10" stroke="#777" /></svg>
            </CaptionButton>
          </Caption>
        </TitleBar>
        <Orb aria-label="Office 按钮"><OrbIcon /></Orb>

        <TabBar>
          <Tab $on>开始</Tab>
          {["插入", "页面布局", "公式", "数据", "审阅", "视图"].map((t) => (
            <Tab key={t}>{t}</Tab>
          ))}
          <TabTools>
            <PlainButton aria-label="帮助"><HelpIcon /></PlainButton>
            <PlainButton aria-label="最小化工作簿">
              <svg width="8" height="10"><path d="M0 8h8" stroke="#5a6d88" strokeWidth="2" /></svg>
            </PlainButton>
            <PlainButton aria-label="还原工作簿">
              <svg width="10" height="8" fill="none" stroke="#5a6d88"><path d="M.5 2.500h7v5h-7zM.5 3.500h7M2 .5h7.500V5" /></svg>
            </PlainButton>
            <PlainButton aria-label="关闭工作簿">
              <svg width="10" height="9"><path d="M1 1l7 7M8 1L1 8" stroke="#5a6d88" strokeWidth="2" /></svg>
            </PlainButton>
          </TabTools>
        </TabBar>

        <Ribbon>
          <Group $w={72}>
            <GroupBody>
              <ClipRow>
                <BigButton $w={30} $gap={4}>
                  <PasteIcon />
                  粘贴
                  <Drop />
                </BigButton>
                <IconColumn>
                  <PlainButton aria-label="剪切"><CutIcon /></PlainButton>
                  <PlainButton aria-label="复制"><CopyIcon /></PlainButton>
                  <PlainButton aria-label="格式刷"><BrushIcon /></PlainButton>
                </IconColumn>
              </ClipRow>
            </GroupBody>
            <Label text="剪贴板" launcher />
          </Group>

          <Group $w={234}>
            <GroupBody $top={10} $gap={10}>
              <Row $gap={3}>
                <Row>
                  <Combo $w={131}>
                    <select aria-label="字体"><option>宋体</option></select>
                    <Drop />
                  </Combo>
                  <Combo $w={47}>
                    <select aria-label="字号"><option>11</option></select>
                    <Drop />
                  </Combo>
                </Row>
                <Segment>
                  <SegButton aria-label="增大字号">
                    <SizeGlyph $size={17}>A<Tri d="M0 3h5L2.500 0z" w={5} h={3} fill="#2f5ca8" /></SizeGlyph>
                  </SegButton>
                  <SegButton aria-label="减小字号">
                    <SizeGlyph $size={13}>A<Tri d="M0 0h5L2.500 3z" w={5} h={3} fill="#2f5ca8" /></SizeGlyph>
                  </SegButton>
                </Segment>
              </Row>
              <Row $gap={3}>
                <Segment>
                  <SegButton><Glyph>B</Glyph></SegButton>
                  <SegButton><Glyph $italic>I</Glyph></SegButton>
                  <SegButton $w={35}><Glyph $line>U</Glyph><Drop /></SegButton>
                </Segment>
                <Segment>
                  <SegButton $w={33} aria-label="边框"><BorderIcon /><Drop /></SegButton>
                </Segment>
                <Segment>
                  <SegButton $w={33} aria-label="填充颜色"><FillIcon /><Drop /></SegButton>
                  <SegButton $w={33} aria-label="字体颜色"><FontColorIcon /><Drop /></SegButton>
                </Segment>
                <Segment>
                  <SegButton $w={33}><PinyinLabel>wén<b>文</b></PinyinLabel><Drop /></SegButton>
                </Segment>
              </Row>
            </GroupBody>
            <Label text="字体" launcher />
          </Group>

          <Group $w={112}>
            <GroupBody $top={3} $gap={2}>
              <Row $gap={6}>
                <Segment>
                  <SegButton aria-label="顶端对齐"><Lines kind="top" /></SegButton>
                  <SegButton $on aria-label="垂直居中"><Lines kind="middle" /></SegButton>
                  <SegButton aria-label="底端对齐"><Lines kind="bottom" /></SegButton>
                </Segment>
                <PlainButton aria-label="自动换行"><WrapIcon /></PlainButton>
              </Row>
              <Row $gap={6}>
                <Segment>
                  <SegButton aria-label="左对齐"><Lines kind="left" /></SegButton>
                  <SegButton $on aria-label="居中"><Lines kind="center" /></SegButton>
                  <SegButton aria-label="右对齐"><Lines kind="right" /></SegButton>
                </Segment>
                <PlainButton aria-label="合并后居中"><MergeIcon /></PlainButton>
                <Drop />
              </Row>
              <Row $gap={3}>
                <Segment>
                  <SegButton aria-label="减少缩进"><IndentIcon /></SegButton>
                  <SegButton aria-label="增加缩进"><IndentIcon right /></SegButton>
                </Segment>
                <Segment>
                  <SegButton $w={30} aria-label="方向"><AngleIcon /><Drop /></SegButton>
                </Segment>
              </Row>
            </GroupBody>
            <Label text="对齐方式" launcher />
          </Group>

          <Group $w={88}>
            <GroupBody $top={2} $gap={2}>
              <Combo $w={80}>
                <select aria-label="数字格式"><option>常规</option></select>
                <Drop />
              </Combo>
              <Row>
                <Segment>
                  <SegButton $w={34} aria-label="会计数字格式"><MoneyIcon /><Drop /></SegButton>
                  <SegButton>%</SegButton>
                  <SegButton><Tri d="M1 2a2 2 0 1 1 4 1q0 3-3 4l-.5-1Q3 5.500 3 4.500 1 4 1 2z" w={6} h={8} fill="#111" /></SegButton>
                </Segment>
              </Row>
              <Row>
                <Segment>
                  <SegButton aria-label="增加小数位数"><DecimalIcon /></SegButton>
                  <SegButton aria-label="减少小数位数"><DecimalIcon fewer /></SegButton>
                </Segment>
              </Row>
            </GroupBody>
            <Label text="数字" launcher />
          </Group>

          <Group $w={116}>
            <GroupBody $top={1}>
              <ListButton><StyleIcon kind="cond" />条件格式<Drop /></ListButton>
              <ListButton><StyleIcon kind="table" />套用表格格式<Drop /></ListButton>
              <ListButton><StyleIcon kind="cell" />单元格样式<Drop /></ListButton>
            </GroupBody>
            <Label text="样式" />
          </Group>

          <Group $w={68}>
            <GroupBody $top={1}>
              <ListButton><CellsIcon kind="insert" />插入<Drop /></ListButton>
              <ListButton><CellsIcon kind="delete" />删除<Drop /></ListButton>
              <ListButton><CellsIcon kind="format" />格式<Drop /></ListButton>
            </GroupBody>
            <Label text="单元格" />
          </Group>

          <Group $w={124}>
            <GroupBody>
              <EditRow>
                <div>
                  <ListButton aria-label="自动求和"><Tri d="M1 0h10v3h-1L9 1.500H4.500L8 5.500 4 10h5l1-2h1v3.500H1v-1l4-4.500-4-5z" w={14} h={12} fill="#111" /><Drop /></ListButton>
                  <ListButton aria-label="填充"><FillDownIcon /><Drop /></ListButton>
                  <ListButton aria-label="清除"><EraserIcon /><Drop /></ListButton>
                </div>
                <BigButton $w={36}>
                  <SortIcon />
                  <span>排序和</span>
                  <Row $gap={3}>筛选<Drop /></Row>
                </BigButton>
                <BigButton $w={36}>
                  <FindIcon />
                  <span>查找和</span>
                  <Row $gap={3}>选择<Drop /></Row>
                </BigButton>
              </EditRow>
            </GroupBody>
            <Label text="编辑" />
          </Group>
        </Ribbon>

        <FormulaBar>
          <NameBox>
            <input aria-label="名称框" defaultValue="B2" />
            <Drop color="#000" w={8} />
          </NameBox>
          <FxButton aria-label="插入函数"><i /><span>f<small>x</small></span></FxButton>
          <FormulaInput aria-label="编辑栏" defaultValue="'320404197411241432" />
          <Expand aria-label="展开编辑栏">
            <svg width="8" height="10" fill="none" stroke="#111" strokeWidth="1.500"><path d="M1 1l3 3 3-3M1 5.500l3 3 3-3" /></svg>
          </Expand>
        </FormulaBar>

        <Workspace>
          <SheetView>
            <Sheet>
              <colgroup>
                <col width={40} /><col width={186} /><col width={397} /><col width={94} /><col width={94} /><col width={94} />
              </colgroup>
              <thead>
                <tr>
                  <Corner><Tri d="M16 0v16H0z" w={16} h={16} fill="#e6eefa" /></Corner>
                  {columns.map((c) => <ColHead key={c} scope="col">{c}</ColHead>)}
                </tr>
              </thead>
              <tbody>
                {rows.map((r, i) => (
                  <tr key={i}>
                    <RowHead scope="row">{i + 1}</RowHead>
                    {columns.map((c, j) => {
                      const text = r[j] || "";
                      return (
                        <Cell key={c} $boxed={i < 4 && j < 2} $flag={i === 1 && j === 1}>
                          {/^\d/.test(text) ? text : text && <Cjk>{text}</Cjk>}
                        </Cell>
                      );
                    })}
                  </tr>
                ))}
              </tbody>
            </Sheet>
          </SheetView>
          <VScroll>
            <VSplit />
            <ScrollButton aria-label="向上滚动"><Tri d="M4 1l5 5H0z" w={9} h={7} fill="#3b5078" /></ScrollButton>
            <VThumb>
              <svg width="8" height="8" stroke="#6b7d98"><path d="M0 .5h8M0 3h8M0 5.500h8" /></svg>
            </VThumb>
            <VTrack />
            <ScrollButton $h={20} aria-label="向下滚动"><Tri d="M0 1h9L4.500 6z" w={9} h={7} fill="#3b5078" /></ScrollButton>
          </VScroll>
          <Arrow width="80" height="110" viewBox="0 0 80 110">
            <path d="M2 0L44 21 18.500 17.500 74 99.500A5 5 0 0 1 66 105L11 23 6 47z" fill="#b81f10" />
          </Arrow>
        </Workspace>

        <SheetBar>
          <NavButtons>
            <PlainButton aria-label="第一张"><Tri d="M0 1h1.500v7H0zM7 1v7L2.500 4.500z" /></PlainButton>
            <PlainButton aria-label="上一张"><Tri d="M6 1v7L1.500 4.500z" /></PlainButton>
            <PlainButton aria-label="下一张"><Tri d="M2 1v7l4.500-3.500z" /></PlainButton>
            <PlainButton aria-label="最后一张"><Tri d="M0 1v7l4.500-3.500zM5.500 1H7v7H5.500z" /></PlainButton>
          </NavButtons>
          <SheetTab $on $w={60}>Sheet1</SheetTab>
          <SheetTab>Sheet2</SheetTab>
          <SheetTab>Sheet3</SheetTab>
          <SheetTab $w={31} aria-label="插入工作表"><NewSheetIcon /></SheetTab>
          <HScroll>
            <HSplit />
            <ScrollButton $w={18} $h={14} aria-label="向左滚动"><Tri d="M5 0v8L1 4z" fill="#3b5078" /></ScrollButton>
            <HThumb>
              <svg width="8" height="7" stroke="#6b7d98"><path d="M.5 0v7M3 0v7M5.500 0v7M7.500 0v7" /></svg>
            </HThumb>
            <ScrollButton $w={16} $h={14} aria-label="向右滚动"><Tri d="M2 0v8l4-4z" fill="#3b5078" /></ScrollButton>
            <HSplit />
            <ScrollButton $w={16} $h={14} tabIndex={-1} aria-hidden />
          </HScroll>
        </SheetBar>

        <StatusBar>
          <Ready>就绪</Ready>
          <StatusTools>
            <Segment>
              {["普通", "页面布局视图", "分页预览"].map((t, i) => (
                <SegButton key={t} $w={18} $on={i === 0} aria-label={t}><ViewIcon kind={i} /></SegButton>
              ))}
            </Segment>
            <output>130%</output>
            <PlainButton aria-label="缩小"><ZoomIcon /></PlainButton>
            <Slider type="range" aria-label="显示比例" min={10} max={190} defaultValue={105} />
            <PlainButton aria-label="放大"><ZoomIcon plus /></PlainButton>
            <Grip width="12" height="12" fill="#3e5f99">
              <path d="M8 1h2v2H8zM4 5h2v2H4zM8 5h2v2H8zM0 9h2v2H0zM4 9h2v2H4zM8 9h2v2H8z" />
            </Grip>
          </StatusTools>
        </StatusBar>

        <Watermark>
          <MarkLine>
            Bai
            <MarkPaw>
              <svg width="46" height="52" viewBox="0 0 46 52" fill="#fff" stroke="#d3d3d6" strokeWidth="1.500">
                <ellipse cx="7" cy="21" rx="5" ry="8" />
                <ellipse cx="17" cy="9" rx="6" ry="8" />
                <ellipse cx="31" cy="9" rx="6" ry="8" />
                <ellipse cx="40" cy="23" rx="5" ry="8" />
                <path d="M23 22c6 0 8 7 13 11s7 8 4 13-10 4-17 4-14 1-17-4 1-10 5-13 6-11 12-11z" />
              </svg>
              <span>du</span>
            </MarkPaw>
            <MarkCjk>经验</MarkCjk>
          </MarkLine>
          <MarkSite>jingyan.baidu.com</MarkSite>
        </Watermark>
      </Window>
    </Desktop>
  );
}
